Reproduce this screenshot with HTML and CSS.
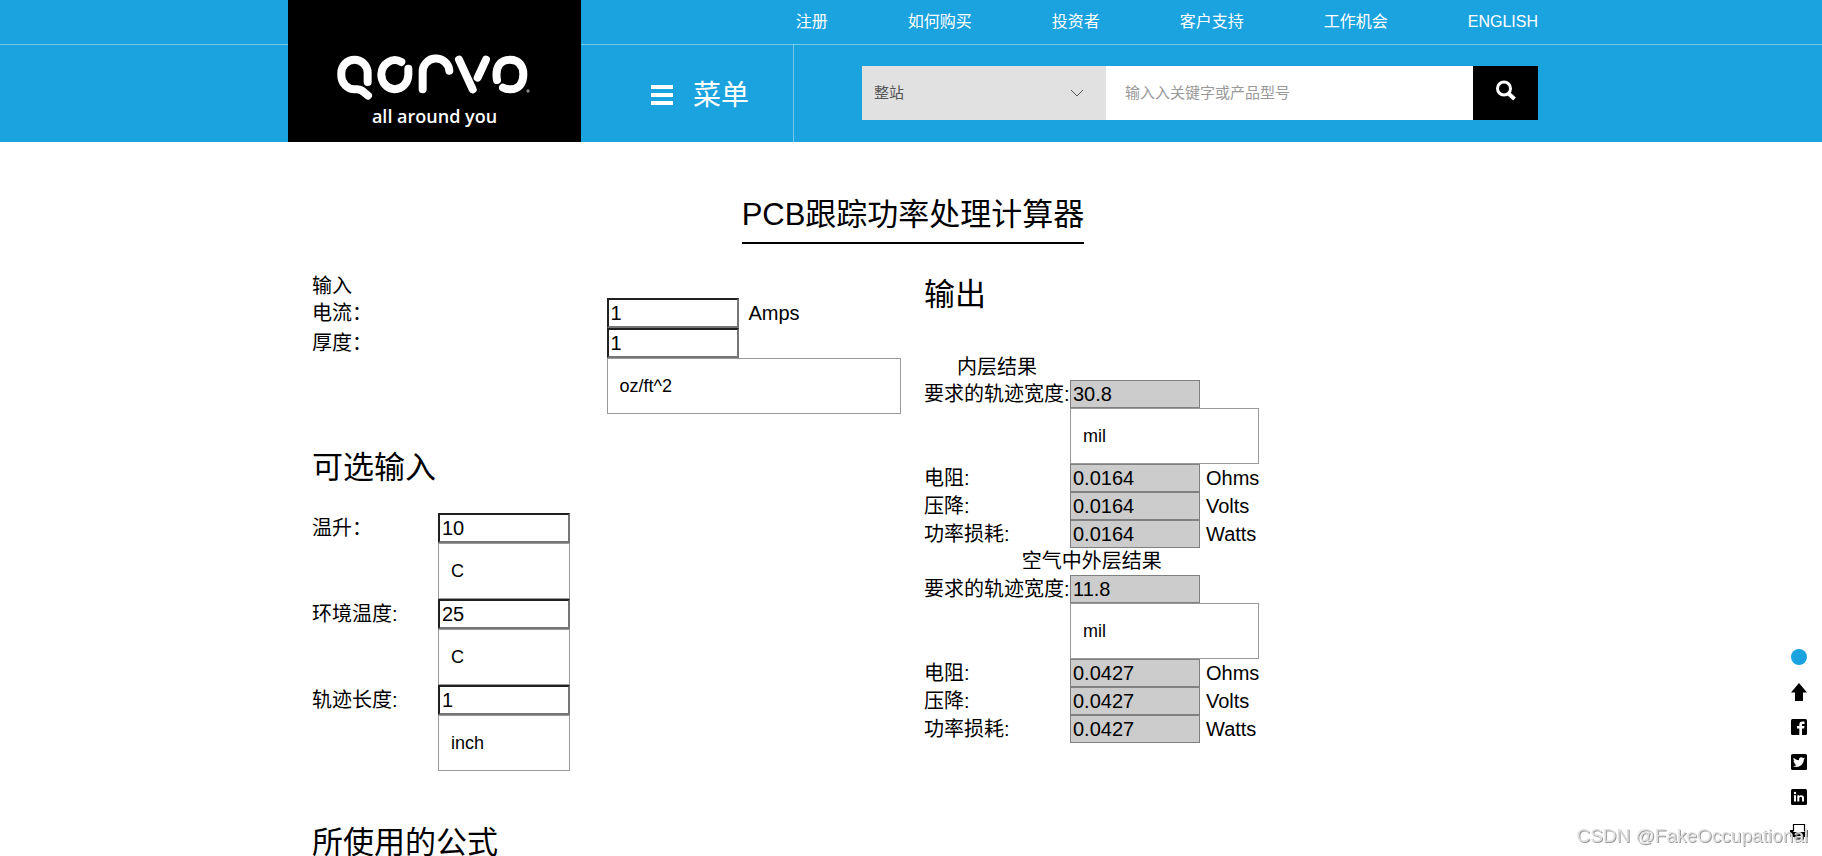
FILE: index.html
```html
<!DOCTYPE html>
<html lang="zh-CN">
<head>
<meta charset="utf-8">
<meta name="viewport" content="width=device-width, initial-scale=1">
<title>PCB跟踪功率处理计算器</title>
<link rel="stylesheet" href="styles.css">
</head>
<body>
<header class="site-header">
  <div class="container header-inner">
    <a class="logo" href="#" aria-label="Qorvo">
      <svg class="logo-mark" viewBox="32 20 594 150" aria-hidden="true">
        <g fill="none" stroke="#fff" stroke-width="24" stroke-linecap="round" stroke-linejoin="round">
          <path d="M127 110V83A39.500 40 0 0 0 48 83V91A41 41 0 0 0 88 132H96C112 133 115 141 128 151"/>
          <path d="M228 50A40.500 44 0 0 0 168 87A40.500 44 0 0 0 249 88V70"/>
          <path d="M292 132V83A40 40 0 0 1 372 76"/>
          <path d="M401 43L442 132M482 43L457 97"/>
          <path d="M515 104C508 64 526 43 554 43C582 43 594 63 594 87C594 113 582 132 555 132C545 132 538 130 533 127"/>
        </g>
        <circle cx="608" cy="137" r="5" fill="#888"/>
      </svg>
      <span class="logo-tagline">all around you</span>
    </a>
    <div class="header-main">
      <nav class="top-nav">
        <a href="#">注册</a>
        <a href="#">如何购买</a>
        <a href="#">投资者</a>
        <a href="#">客户支持</a>
        <a href="#">工作机会</a>
        <a href="#">ENGLISH</a>
      </nav>
      <div class="header-bar">
        <button class="menu-button" type="button">
          <svg class="menu-icon" viewBox="0 0 22 21" aria-hidden="true"><path fill="#fff" d="M0 0h22v4H0zM0 8h22v4H0zM0 16h22v4H0z"/></svg>
          <span>菜单</span>
        </button>
        <form class="search">
          <select class="search-scope" aria-label="搜索范围"><option>整站</option></select>
          <input class="search-field" type="text" placeholder="输入入关键字或产品型号" aria-label="搜索">
          <button class="search-button" type="button" aria-label="搜索">
            <svg class="search-icon" viewBox="0 0 22 22" aria-hidden="true"><circle cx="9" cy="8.500" r="6.500" fill="none" stroke="#fff" stroke-width="3"/><path d="M13.500 13.500L19.500 19" stroke="#fff" stroke-width="4"/></svg>
          </button>
        </form>
      </div>
    </div>
  </div>
</header>

<main class="container page">
  <h1 class="page-title"><span>PCB跟踪功率处理计算器</span></h1>
  <div class="columns">
    <section class="inputs">
      <p class="group-name">输入</p>
      <div class="field-grid">
        <label for="current">电流：</label>
        <div class="with-unit"><input class="field" id="current" type="text" value="1"><span>Amps</span></div>
        <label for="thickness">厚度：</label>
        <div><input class="field" id="thickness" type="text" value="1"></div>
        <select class="unit" aria-label="厚度单位"><option>oz/ft^2</option></select>
      </div>
      <h2>可选输入</h2>
      <div class="field-grid optional">
        <label for="rise">温升：</label>
        <input class="field" id="rise" type="text" value="10">
        <select class="unit" aria-label="温升单位"><option>C</option></select>
        <label for="ambient">环境温度:</label>
        <input class="field" id="ambient" type="text" value="25">
        <select class="unit" aria-label="环境温度单位"><option>C</option></select>
        <label for="length">轨迹长度:</label>
        <input class="field" id="length" type="text" value="1">
        <select class="unit" aria-label="轨迹长度单位"><option>inch</option></select>
      </div>
      <h2 class="formulas">所使用的公式</h2>
    </section>

    <section class="outputs">
      <h2>输出</h2>
      <div class="result-grid">
        <p class="result-name">内层结果</p>
        <label for="in-width">要求的轨迹宽度:</label>
        <input class="result" id="in-width" type="text" value="30.8" readonly>
        <select class="unit" aria-label="内层宽度单位"><option>mil</option></select>
        <label for="in-res">电阻:</label>
        <input class="result" id="in-res" type="text" value="0.0164" readonly><span>Ohms</span>
        <label for="in-drop">压降:</label>
        <input class="result" id="in-drop" type="text" value="0.0164" readonly><span>Volts</span>
        <label for="in-loss">功率损耗:</label>
        <input class="result" id="in-loss" type="text" value="0.0164" readonly><span>Watts</span>
        <p class="result-name wide">空气中外层结果</p>
        <label for="out-width">要求的轨迹宽度:</label>
        <input class="result" id="out-width" type="text" value="11.8" readonly>
        <select class="unit" aria-label="外层宽度单位"><option>mil</option></select>
        <label for="out-res">电阻:</label>
        <input class="result" id="out-res" type="text" value="0.0427" readonly><span>Ohms</span>
        <label for="out-drop">压降:</label>
        <input class="result" id="out-drop" type="text" value="0.0427" readonly><span>Volts</span>
        <label for="out-loss">功率损耗:</label>
        <input class="result" id="out-loss" type="text" value="0.0427" readonly><span>Watts</span>
      </div>
    </section>
  </div>
</main>

<aside class="share">
  <a href="#" aria-label="关注"><svg viewBox="0 0 18 18"><circle cx="9" cy="9" r="8" fill="#1ba3e0"/></svg></a>
  <a href="#" aria-label="返回顶部"><svg viewBox="0 0 18 18"><path d="M9 0L17 9.500H13V18H5V9.500H1z"/></svg></a>
  <a href="#" aria-label="Facebook"><svg viewBox="0 0 18 18"><rect x="1" y="1" width="16" height="16" rx="1.500"/><path fill="#fff" d="M9.300 17V10.500H7V8H9.300V6.400C9.300 4.400 10.500 3.400 12.300 3.400H14.500V6H13C12.200 6 12 6.400 12 7V8H14.500L14.100 10.500H12V17z"/></svg></a>
  <a href="#" aria-label="Twitter"><svg viewBox="0 0 18 18"><rect x="1" y="1" width="16" height="16" rx="1.500"/><path fill="#fff" d="M15 5.300c-.4.200-.9.300-1.400.4.500-.3.900-.8 1.100-1.300-.5.300-1 .5-1.600.6a2.500 2.500 0 0 0-4.200 2.200C6.800 7.100 5 6.200 3.800 4.700c-.7 1.200-.3 2.600.8 3.300-.4 0-.8-.1-1.100-.3 0 1.200.8 2.200 2 2.500-.4.100-.7.100-1.100 0 .3 1 1.200 1.700 2.300 1.700A5 5 0 0 1 3 13c3.800 2.300 10.700.4 10.800-6.400.5-.4.900-.8 1.200-1.300z"/></svg></a>
  <a href="#" aria-label="LinkedIn"><svg viewBox="0 0 18 18"><rect x="1" y="1" width="16" height="16" rx="1.500"/><path fill="#fff" d="M4 7.300h2V13.500H4zM7.300 7.300h1.900v.9c.9-1.600 4.800-1.600 4.800 1.500v3.800h-2V10.300c0-1.800-2.700-1.700-2.700 0v3.200h-2z"/><circle cx="5" cy="5" r="1.200" fill="#fff"/></svg></a>
  <a href="#" aria-label="打印"><svg viewBox="0 0 18 18"><path fill="none" stroke="#000" stroke-width="1.200" d="M3.500 8V1.500H14.500V8"/><path d="M0 7H3.500V9H14.500V7H18V14H14V16.500H4.500V14H0z"/></svg></a>
</aside>
<div class="watermark">CSDN @FakeOccupational</div>
</body>
</html>
```
FILE: styles.css
```css
* { box-sizing: border-box; }

body {
  margin: 0;
  background: #fff;
  color: #000;
  font: 20px/24px "Liberation Sans", "Noto Sans CJK SC", sans-serif;
}

input, select, button { font-family: inherit; margin: 0; border-radius: 0; }
h1, h2, p { margin: 0; font-weight: 400; }

.container { max-width: 1254px; margin: 0 auto; padding-left: 4px; }

/* Header */
.site-header {
  background: linear-gradient(#76c8ed, #76c8ed) 0 44px / 100% 1px no-repeat, #1ba3e0;
}
.header-inner { display: flex; }
.logo {
  display: flex;
  flex-direction: column;
  align-items: center;
  flex: none;
  width: 293px;
  height: 142px;
  padding-top: 52px;
  background: #000;
  color: #fff;
  text-decoration: none;
}
.logo-mark { width: 198px; height: 50px; }
.logo-tagline { font: 600 18px/28px "Open Sans", sans-serif; }

.header-main { flex: 1; display: flex; flex-direction: column; }
.top-nav {
  display: flex;
  justify-content: flex-end;
  align-items: center;
  gap: 80px;
  height: 44px;
  margin-bottom: 1px;
  font-size: 16px;
}
.top-nav a { color: #fff; text-decoration: none; }
.header-bar { display: flex; align-items: center; flex: 1; }
.menu-button {
  display: flex;
  align-items: center;
  align-self: stretch;
  gap: 20px;
  width: 213px;
  padding: 0 0 2px 70px;
  border: 0;
  border-right: 1px solid #76c8ed;
  background: none;
  color: #fff;
  font-size: 28px;
}
.menu-icon { width: 22px; height: 21px; margin-top: 6px; }
.search { display: flex; flex: 1; height: 54px; margin: 0 0 2px 68px; }
.search-scope {
  appearance: none;
  width: 244px;
  padding: 0 12px;
  border: 0;
  background: #e1e1e1 url("data:image/svg+xml,%3Csvg xmlns='http://www.w3.org/2000/svg' width='14' height='8'%3E%3Cpath d='M1 1l6 6 6-6' fill='none' stroke='%23555'/%3E%3C/svg%3E") no-repeat right 22px center;
  color: #555;
  font-size: 15px;
}
.search-field {
  flex: 1;
  min-width: 0;
  padding: 0 19px;
  border: 0;
  background: #fff;
  font-size: 15px;
}
.search-field::placeholder { color: #999; }
.search-button { width: 65px; padding: 0 0 4px; border: 0; background: #000; }
.search-icon { width: 22px; height: 22px; vertical-align: middle; }

/* Calculator */
.page-title {
  margin-top: 51px;
  text-align: center;
  font-size: 31px;
  line-height: 44px;
}
.page-title span {
  display: inline-block;
  padding-bottom: 5px;
  border-bottom: 2px solid #000;
  vertical-align: top;
}
.columns { display: flex; gap: 23px; margin-top: 30px; padding-left: 24px; }
.inputs { flex: 0 1 589px; }
h2 { font-size: 31px; line-height: 42px; }
.inputs h2 { margin: 33px 0 24px; }
.inputs .formulas { margin: 51px 0 0; }

.field-grid {
  display: grid;
  grid-template-columns: 1fr 1fr;
  align-items: center;
}
.field-grid .unit { grid-column: 2; }
.optional { grid-template-columns: 126px 132px; }
.field-grid > div { display: flex; align-items: center; }
.with-unit { gap: 10px; }
.field {
  width: 132px;
  height: 30px;
  padding: 0 2px;
  border: 2px solid;
  border-color: #212121 #767676 #767676 #212121;
  background: #fff;
  font-size: 20px;
}
.unit {
  appearance: none;
  width: 100%;
  height: 56px;
  padding: 0 12px;
  border: 1px solid #999;
  background: #fff;
  color: #000;
  font-size: 18px;
}

.result-grid {
  display: grid;
  grid-template-columns: 146px 130px auto;
  align-items: center;
  margin-top: 38px;
}
.result-grid label { grid-column: 1; white-space: nowrap; }
.result-grid .unit { grid-column: 2 / 4; }
.result-grid span { padding-left: 6px; }
.result-name { grid-column: 1; line-height: 26px; text-align: center; }
.result-name.wide { grid-column: 1 / 4; line-height: 27px; }
.result {
  width: 130px;
  height: 28px;
  padding: 0 2px;
  border: 1px solid #808080;
  background: #ccc;
  color: #000;
  font-size: 20px;
}

/* Floating share bar */
.share {
  position: fixed;
  right: 14px;
  bottom: 15px;
  display: flex;
  flex-direction: column;
  gap: 17px;
}
.share a { display: block; height: 18px; }
.share svg { display: block; width: 18px; height: 18px; }

.watermark {
  position: fixed;
  right: 14px;
  bottom: 8px;
  color: #e0e0e0;
  font-size: 19px;
  text-shadow: 1px 1px 0 #999;
}
```
